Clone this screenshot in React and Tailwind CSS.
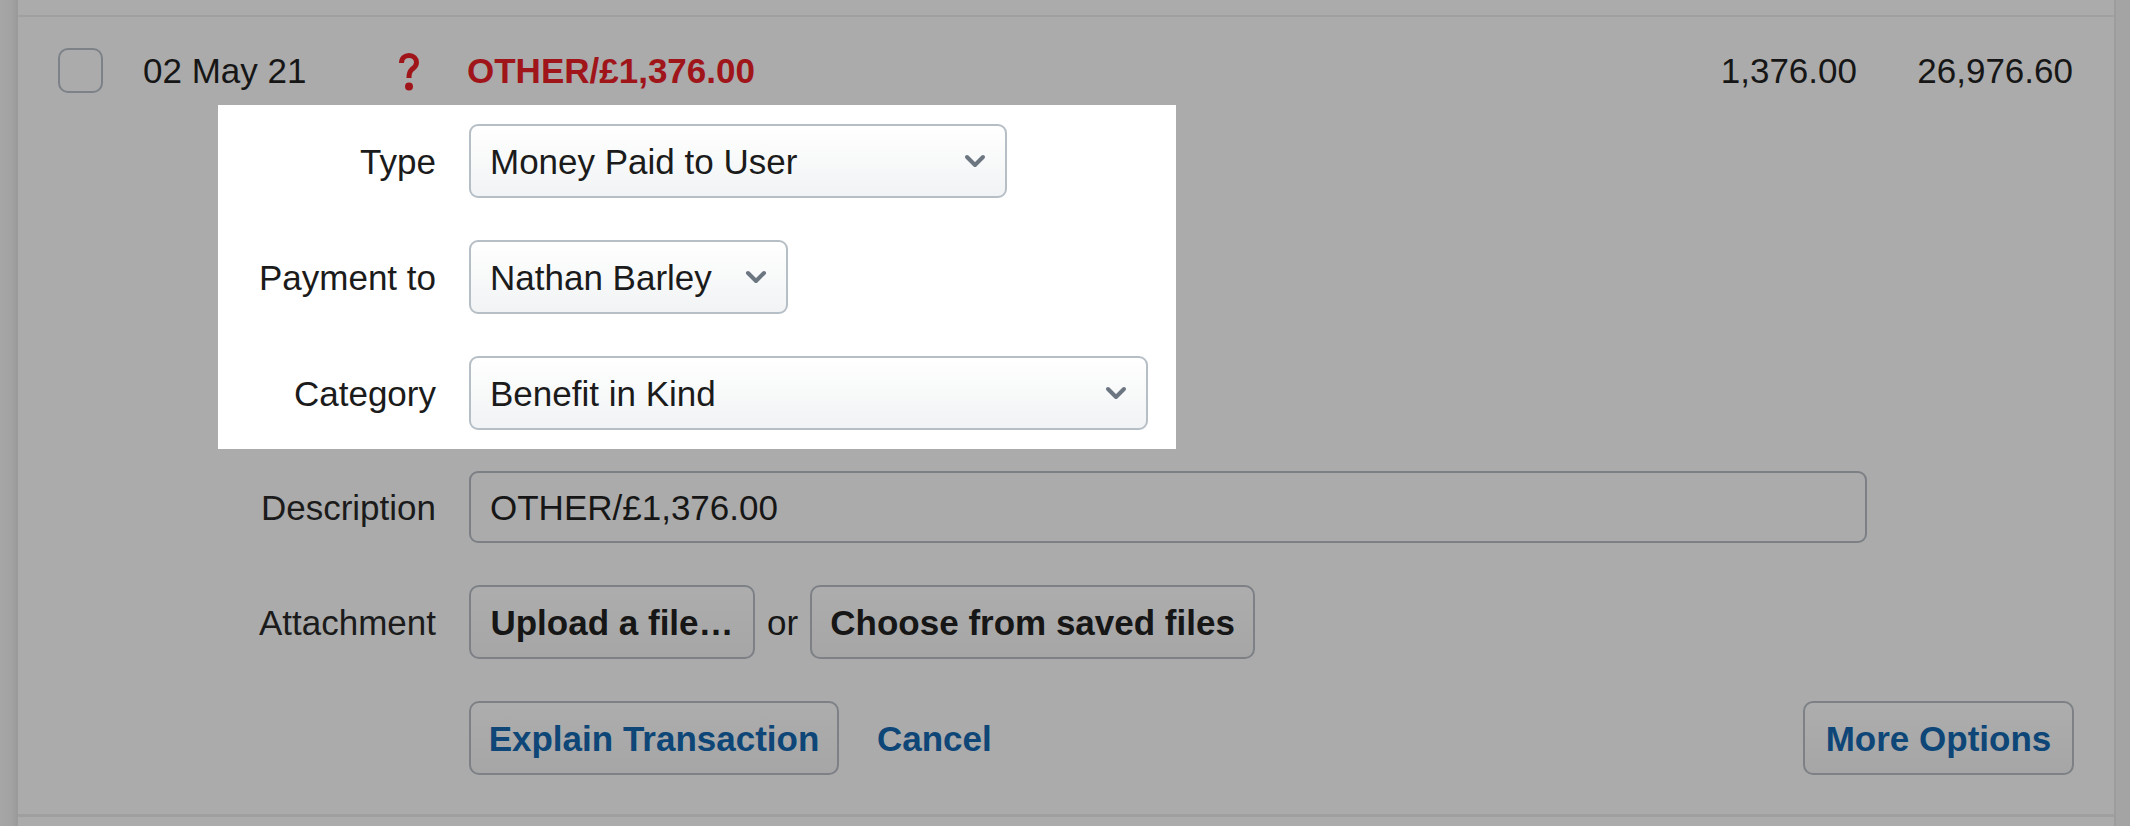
import React from "react";

function Chevron() {
  return (
    <svg width="22" height="14" viewBox="0 0 22 14" className="shrink-0">
      <path d="M3 3 L11 11 L19 3" fill="none" stroke="#6c7680" strokeWidth="4" strokeLinecap="round" strokeLinejoin="round" />
    </svg>
  );
}

function Select({ value, width }) {
  return (
    <div
      className={`${width} h-[74px] flex items-center justify-between pl-[19px] pr-[19px] rounded-[9px] border-2 border-[#b7bfc6] bg-[linear-gradient(#ffffff,#f1f3f4)] text-[#1b1b1b]`}
    >
      <span className="whitespace-nowrap">{value}</span>
      <Chevron />
    </div>
  );
}

function Row({ label, children }) {
  return (
    <div className="flex items-center">
      <div className="w-[218px] text-right text-[#1b1b1b] whitespace-nowrap">{label}</div>
      <div className="ml-[33px] flex items-center">{children}</div>
    </div>
  );
}

function GrayButton({ children, className = "" }) {
  return (
    <div
      className={`h-[74px] flex items-center justify-center whitespace-nowrap rounded-[10px] border-2 border-[#7d8186] bg-[linear-gradient(#adadad,#a6a6a6)] font-bold ${className}`}
    >
      {children}
    </div>
  );
}

export default function App() {
  return (
    <div className="w-[2130px] h-[826px] flex bg-[#ababab] overflow-hidden [font-family:'Liberation_Sans',Arial,sans-serif] text-[35px] leading-none text-[#161616]">
      <div className="w-[18px] h-full bg-[linear-gradient(to_right,#a6a6a6,#a2a2a2_70%,#9a9a9a)] border-r border-[#9b9b9b]" />
      <div className="flex-1 flex flex-col">
        <div className="h-[15px]" />
        <div className="h-[2px] bg-[#a0a0a0]" />
        {/* transaction row */}
        <div className="mt-[31px] h-[45px] flex items-center">
          <div className="ml-[40px] w-[45px] h-[45px] rounded-[10px] border-2 border-[#7c8287]" />
          <div className="ml-[40px] w-[255px] whitespace-nowrap">02 May 21</div>
          <svg width="22" height="38" viewBox="0 0 22 38" className="shrink-0 mt-[2px]">
            <path
              d="M3.5 10 C3.5 5 7 2.5 11 2.5 C15.5 2.5 18.5 5.5 18.5 9.5 C18.5 13.5 15.5 15 13.5 16.8 C11.8 18.3 11 20 11 25"
              fill="none"
              stroke="#a0151a"
              strokeWidth="5"
            />
            <circle cx="11" cy="33.5" r="4" fill="#a0151a" />
          </svg>
          <div className="ml-[47px] font-bold text-[#a0151a] whitespace-nowrap">OTHER/£1,376.00</div>
          <div className="flex-1" />
          <div className="text-right">1,376.00</div>
          <div className="w-[216px] text-right">26,976.60</div>
          <div className="w-[41px]" />
        </div>

        {/* form */}
        <div className="ml-[200px] mt-[12px] flex flex-col">
          <div className="w-[958px] bg-white pt-[19px] pb-[19px] flex flex-col gap-[42px]">
            <Row label="Type">
              <Select value="Money Paid to User" width="w-[538px]" />
            </Row>
            <Row label="Payment to">
              <Select value="Nathan Barley" width="w-[319px]" />
            </Row>
            <Row label="Category">
              <Select value="Benefit in Kind" width="w-[679px]" />
            </Row>
          </div>
          <div className="mt-[22px] flex flex-col gap-[42px]">
            <Row label="Description">
              <div className="w-[1398px] h-[72px] flex items-center pl-[19px] rounded-[9px] border-2 border-[#7c8085]">
                OTHER/£1,376.00
              </div>
            </Row>
            <Row label="Attachment">
              <GrayButton className="w-[286px]">Upload a file…</GrayButton>
              <span className="mx-[12px]">or</span>
              <GrayButton className="w-[445px]">Choose from saved files</GrayButton>
            </Row>
            <div className="flex items-center">
              <div className="w-[218px]" />
              <div className="ml-[33px] flex items-center flex-1">
                <GrayButton className="w-[370px] text-[#0d4677]">Explain Transaction</GrayButton>
                <span className="ml-[38px] font-bold text-[#0d4677]">Cancel</span>
                <div className="flex-1" />
                <GrayButton className="w-[271px] text-[#0d4677]">More Options</GrayButton>
                <div className="w-[40px]" />
              </div>
            </div>
          </div>
        </div>
        <div className="flex-1" />
        <div className="h-[3px] bg-[#9f9f9f] mb-[9px]" />
      </div>
      <div className="w-[16px] h-full bg-[#a4a4a4] border-l-2 border-[#9d9d9d]" />
    </div>
  );
}
